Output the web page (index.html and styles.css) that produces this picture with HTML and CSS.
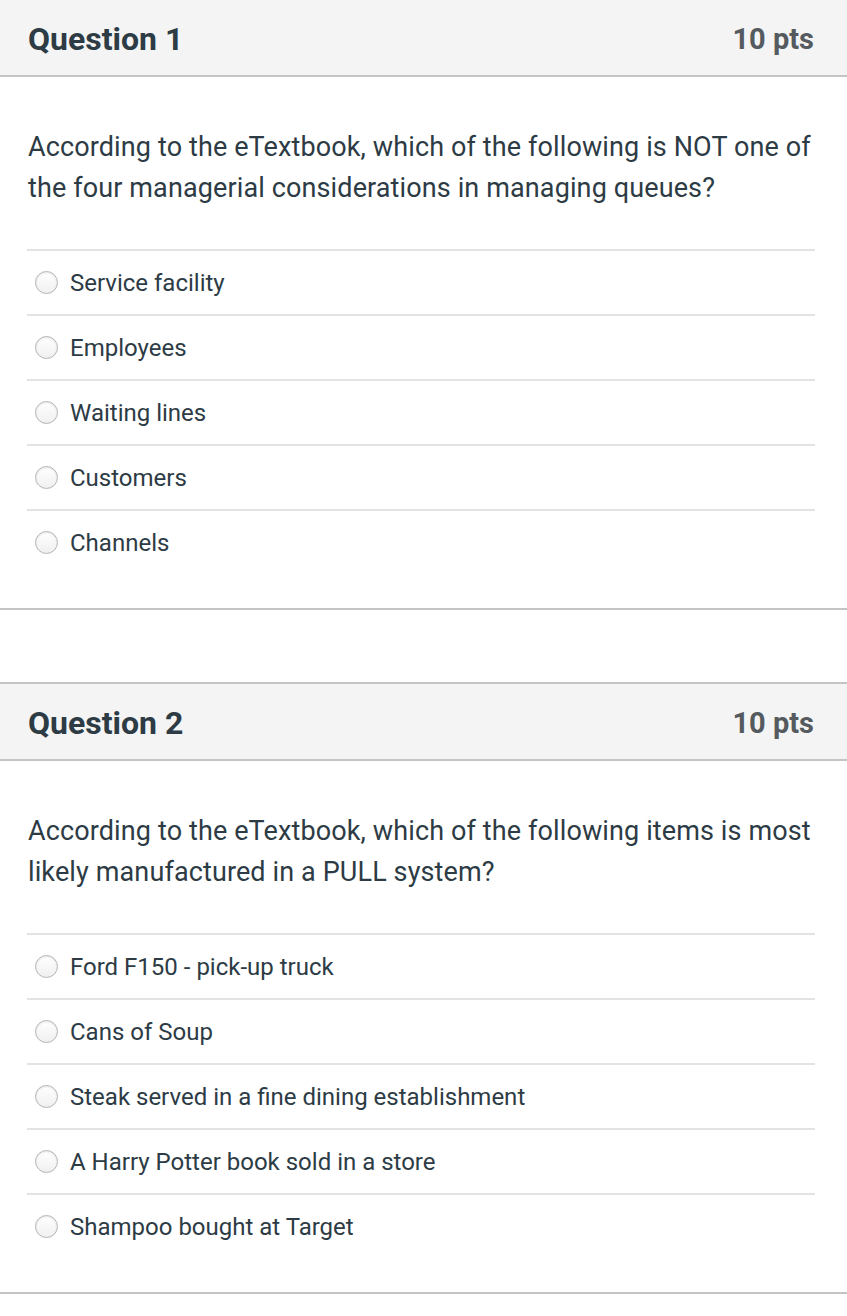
FILE: index.html
```html
<!DOCTYPE html>
<html>
<head>
<meta charset="utf-8">
<link rel="stylesheet" href="styles.css">
</head>
<body>
<div class="quiz">
  <section class="question first">
    <div class="q-header">
      <h2 class="q-title">Question 1</h2>
      <span class="q-points">10 pts</span>
    </div>
    <div class="q-body">
      <p class="q-text">According to the eTextbook, which of the following is NOT one of the four managerial considerations in managing queues?</p>
      <div class="answers">
        <label class="answer"><span class="radio"></span><span class="answer-text">Service facility</span></label>
        <label class="answer"><span class="radio"></span><span class="answer-text">Employees</span></label>
        <label class="answer"><span class="radio"></span><span class="answer-text">Waiting lines</span></label>
        <label class="answer"><span class="radio"></span><span class="answer-text">Customers</span></label>
        <label class="answer"><span class="radio"></span><span class="answer-text">Channels</span></label>
      </div>
    </div>
  </section>
  <section class="question">
    <div class="q-header">
      <h2 class="q-title">Question 2</h2>
      <span class="q-points">10 pts</span>
    </div>
    <div class="q-body">
      <p class="q-text">According to the eTextbook, which of the following items is most likely manufactured in a PULL system?</p>
      <div class="answers">
        <label class="answer"><span class="radio"></span><span class="answer-text">Ford F150 - pick-up truck</span></label>
        <label class="answer"><span class="radio"></span><span class="answer-text">Cans of Soup</span></label>
        <label class="answer"><span class="radio"></span><span class="answer-text">Steak served in a fine dining establishment</span></label>
        <label class="answer"><span class="radio"></span><span class="answer-text">A Harry Potter book sold in a store</span></label>
        <label class="answer"><span class="radio"></span><span class="answer-text">Shampoo bought at Target</span></label>
      </div>
    </div>
  </section>
</div>
</body>
</html>
```

FILE: styles.css
```css
html, body {
  margin: 0;
  padding: 0;
  background: #ffffff;
}
body {
  font-family: Roboto, "Liberation Sans", Arial, sans-serif;
  color: #2d3b45;
}
.quiz {
  display: flex;
  flex-direction: column;
  gap: 72px;
  margin-top: -2px;
}
.question {
  border-top: 2px solid #c4c4c4;
  border-bottom: 2px solid #c4c4c4;
}
.q-header {
  height: 73px;
  background: #f4f4f4;
  border-bottom: 2px solid #c4c4c4;
  display: flex;
  align-items: center;
  justify-content: space-between;
  padding: 2px 33px 0 28px;
}
.q-title {
  margin: 0;
  font-size: 32px;
  font-weight: 700;
  color: #2d3b45;
}
.q-points {
  font-size: 29px;
  font-weight: 700;
  color: #555a5e;
}
.q-body {
  padding: 50px 32px 34px 27px;
}
.q-text {
  margin: 0 0 40px 1px;
  font-size: 27px;
  letter-spacing: 0.12px;
  line-height: 41px;
  color: #2d3b45;
}
.answers {
  display: flex;
  flex-direction: column;
}
.answer {
  height: 63px;
  border-top: 2px solid #e3e3e3;
  display: flex;
  align-items: center;
  padding-left: 8px;
  gap: 12px;
}
.radio {
  width: 23px;
  height: 23px;
  box-sizing: border-box;
  border-radius: 50%;
  border: 1px solid #b5b5b5;
  background: linear-gradient(#ffffff, #f0f0f0);
  box-shadow: inset 0 1px 2px rgba(0,0,0,0.1);
  flex: none;
}
.answer-text {
  font-size: 24px;
  color: #2d3b45;
}
```
